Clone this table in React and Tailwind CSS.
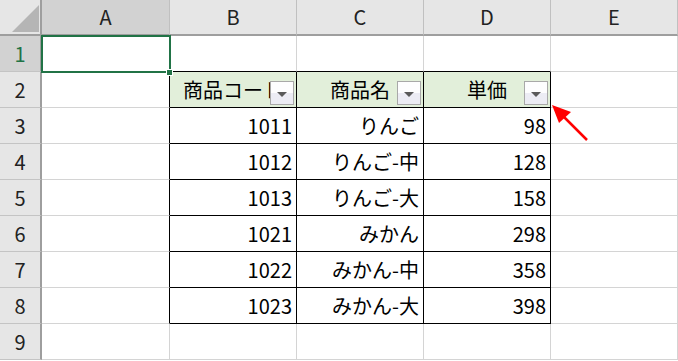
import React from "react";

const font = { fontFamily: '"Noto Sans CJK JP", "Noto Sans", sans-serif' };

const cols = ["A", "B", "C", "D", "E"];

// table body: code, name, price
const rows = [
  ["1011", "りんご", "98"],
  ["1012", "りんご-中", "128"],
  ["1013", "りんご-大", "158"],
  ["1021", "みかん", "298"],
  ["1022", "みかん-中", "358"],
  ["1023", "みかん-大", "398"],
];

function FilterButton() {
  return (
    <div className="absolute right-[2px] top-[9px] flex h-[24px] w-[24px] items-center justify-center border border-[#a8a8a8] bg-gradient-to-b from-[#fdfdfe] from-50% to-[#ececf4] to-50%">
      <svg width="10" height="6" viewBox="0 0 10 6" className="mt-[3px]">
        <path d="M0 0 L10 0 L5 5 Z" fill="#5a5a5a" />
      </svg>
    </div>
  );
}

function HeaderCell({ children, selected }) {
  return (
    <div
      className={`flex h-[36px] items-center justify-center border-r border-b-2 border-r-[#c0c0c0] border-b-[#9e9e9e] text-[20px] ${
        selected ? "bg-[#d2d2d2]" : "bg-[#e6e6e6]"
      } text-[#222]`}
    >
      {children}
    </div>
  );
}

function RowLabel({ n, selected }) {
  return (
    <div
      className={`flex h-[36px] items-center justify-center border-r-2 border-b border-r-[#9e9e9e] border-b-[#c4c4c4] text-[20px] ${
        selected ? "bg-[#d2d2d2] text-[#217346]" : "bg-[#e6e6e6] text-[#222]"
      }`}
    >
      {n}
    </div>
  );
}

export default function App() {
  const cellBase = "relative flex h-[36px] items-center border-r border-b text-[20px] text-black";

  const cellFor = (r, c) => {
    // r: 1-based row, c: 0-based column index (A=0)
    const inTable = r >= 2 && r <= 8 && c >= 1 && c <= 3;
    const leftOfTable = r >= 2 && r <= 8 && c === 0;
    const aboveTable = r === 1 && c >= 1 && c <= 3;
    let border = "border-r-[#d4d4d4] border-b-[#d4d4d4]";
    if (inTable) border = "border-r-black border-b-black";
    else if (leftOfTable) border = "border-r-black border-b-[#d4d4d4]";
    else if (aboveTable) border = "border-r-[#d4d4d4] border-b-black";

    let content = null;
    let align = "justify-end pr-[4px]";
    let bg = "bg-white";
    if (r === 2 && inTable) {
      bg = "bg-[#e2efda]";
      align = "justify-center overflow-hidden";
      const label = ["商品コード", "商品名", "単価"][c - 1];
      content = (
        <>
          <span className="whitespace-nowrap">{label}</span>
          <FilterButton />
        </>
      );
    } else if (r >= 3 && r <= 8 && inTable) {
      content = rows[r - 3][c - 1];
    }

    return (
      <div key={`${r}-${c}`} className={`${cellBase} ${border} ${bg} ${align}`}>
        {content}
      </div>
    );
  };

  return (
    <div className="relative h-[361px] w-[678px] overflow-hidden bg-white" style={font}>
      <div className="grid grid-cols-[42px_128px_127px_127px_127px_127px]">
        {/* select-all corner */}
        <div className="flex h-[36px] items-end justify-end border-r-2 border-b-2 border-r-[#9e9e9e] border-b-[#9e9e9e] bg-[#e6e6e6] pr-[1px] pb-[2px]">
          <svg width="27" height="27" viewBox="0 0 27 27">
            <path d="M27 0 L27 27 L0 27 Z" fill="#b5b5b5" />
          </svg>
        </div>
        {cols.map((c) => (
          <HeaderCell key={c} selected={c === "A"}>
            {c}
          </HeaderCell>
        ))}

        {[1, 2, 3, 4, 5, 6, 7, 8, 9].map((r) => (
          <React.Fragment key={r}>
            <RowLabel n={r} selected={r === 1} />
            {cols.map((_, c) => cellFor(r, c))}
          </React.Fragment>
        ))}
      </div>

      {/* active cell A1 */}
      <div className="pointer-events-none absolute left-[41px] top-[35px] h-[38px] w-[130px] border-2 border-[#217346]" />
      <div className="pointer-events-none absolute left-[166px] top-[69px] h-[7px] w-[7px] border border-white bg-[#217346]" />

      {/* red arrow pointing at the filter button */}
      <svg className="pointer-events-none absolute left-0 top-0" width="678" height="361">
        <line x1="587" y1="140" x2="561" y2="114" stroke="#ff0000" strokeWidth="2.5" />
        <path d="M552 105 L571 112 L559 123 Z" fill="#ff0000" />
      </svg>
    </div>
  );
}
